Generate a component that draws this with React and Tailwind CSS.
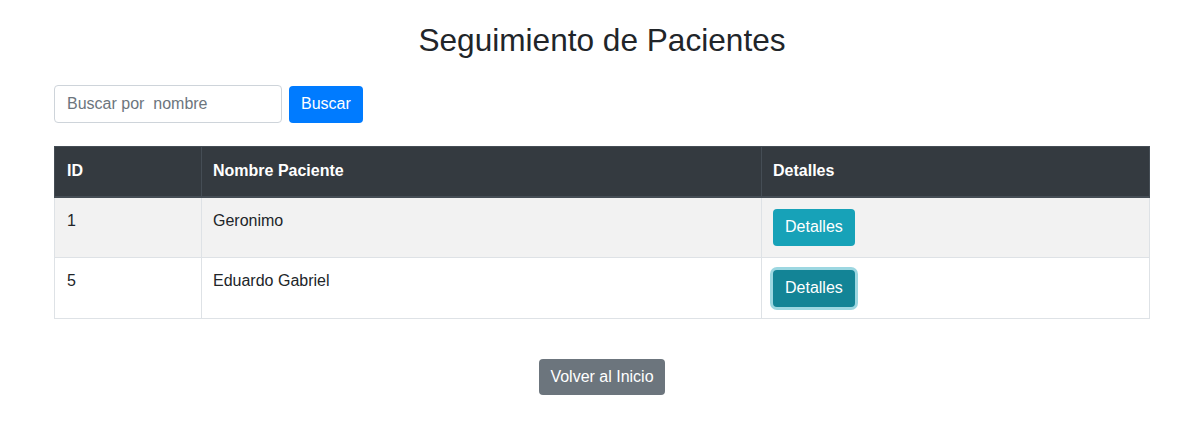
import { useState } from 'react';

const patients = [
  { id: 1, name: 'Geronimo' },
  { id: 5, name: 'Eduardo Gabriel' },
];

export default function App() {
  const [search, setSearch] = useState('');

  return (
    <div className="min-h-[423px] bg-white font-['Liberation_Sans',Arial,sans-serif] text-[#212529]">
      <div className="ml-[54px] w-[1096px] pt-[21px]">
        <h2 className="text-center text-[31.6px] leading-[38px] font-normal">Seguimiento de Pacientes</h2>

        <div className="mt-[26px] flex items-center gap-[7px]">
          <input
            value={search}
            onChange={(e) => setSearch(e.target.value)}
            placeholder="Buscar por  nombre"
            className="h-[38px] w-[228px] rounded-[4px] border border-[#ced4da] px-3 text-base text-[#495057] placeholder:text-[#6c757d] outline-none"
          />
          <button type="button" className="h-[37px] rounded-[4px] bg-[#007bff] px-3 text-base text-white">
            Buscar
          </button>
        </div>

        <table className="mt-[23px] w-full border-collapse text-base">
          <thead>
            <tr className="bg-[#343a40] text-white">
              <th className="h-[50px] w-[147px] border border-[#454d55] border-b-2 px-3 text-left font-bold">ID</th>
              <th className="w-[560px] border border-[#454d55] border-b-2 pl-[11px] pr-3 text-left font-bold">Nombre Paciente</th>
              <th className="border border-[#454d55] border-b-2 pl-[11px] pr-3 text-left font-bold">Detalles</th>
            </tr>
          </thead>
          <tbody>
            {patients.map((patient, i) => (
              <tr key={patient.id} className={i % 2 === 0 ? 'bg-[#f2f2f2]' : 'bg-white'}>
                <td className="h-[61px] border border-[#dee2e6] px-3 pt-[11px] align-top">{patient.id}</td>
                <td className="border border-[#dee2e6] pl-[11px] pr-3 pt-[11px] align-top">{patient.name}</td>
                <td className="border border-[#dee2e6] px-[11px] align-middle">
                  <button
                    type="button"
                    className={
                      i === 1
                        ? 'h-[37px] rounded-[4px] bg-[#138496] px-3 text-white shadow-[0_0_0_3px_rgba(58,176,195,0.5)]'
                        : 'h-[37px] rounded-[4px] bg-[#17a2b8] px-3 text-white'
                    }
                  >
                    Detalles
                  </button>
                </td>
              </tr>
            ))}
          </tbody>
        </table>

        <div className="mt-[40px] flex justify-center">
          <button type="button" className="h-[36px] w-[126px] rounded-[4px] bg-[#6c757d] text-base text-white">
            Volver al Inicio
          </button>
        </div>
      </div>
    </div>
  );
}
